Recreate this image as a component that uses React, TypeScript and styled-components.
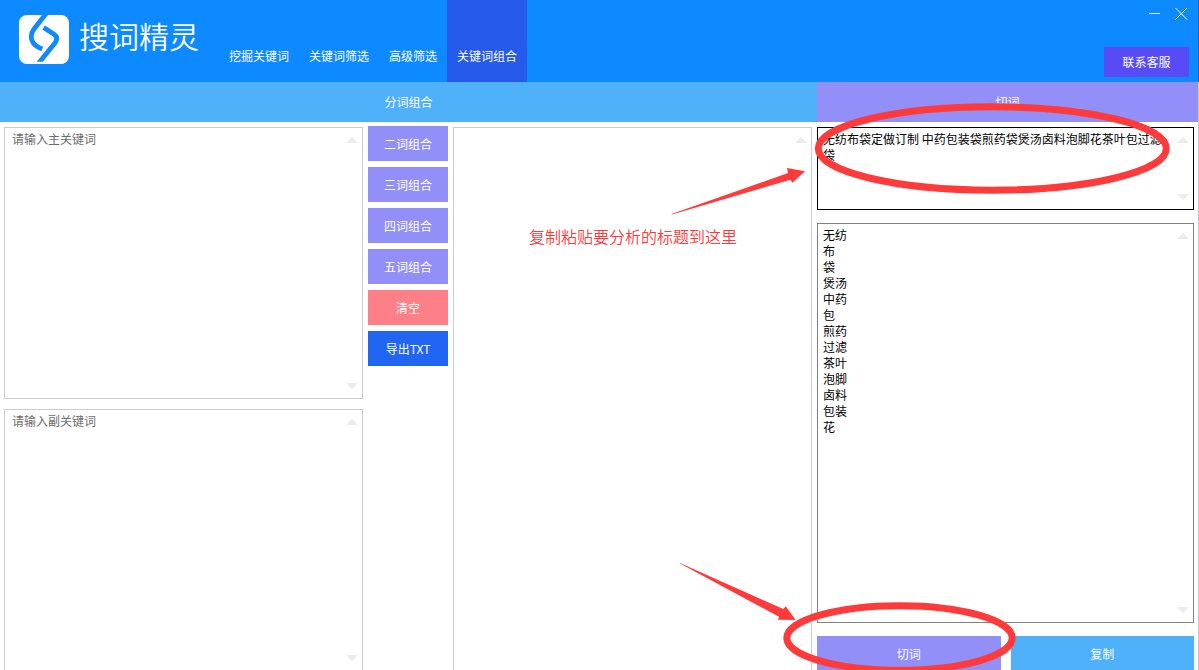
import React from 'react';
import styled, { createGlobalStyle } from 'styled-components';

const GlobalStyle = createGlobalStyle`
  *, *::before, *::after { box-sizing: border-box; }
  html, body { margin: 0; padding: 0; background: #fff; }
  body, button, textarea {
    font-family: "Noto Sans CJK SC", "Liberation Sans", sans-serif;
    font-size: 12px;
    line-height: 16px;
  }
`;

const colors = {
  header: '#0d8aff',
  active: '#255aeb',
  sky: '#50b1fb',
  violet: '#928ff8',
  contact: '#574bf6',
  coral: '#fd7f87',
  export: '#2166f3',
  mark: '#ff3a3a',
};

const Window = styled.div`
  position: relative;
  display: flex;
  flex-direction: column;
  height: 100vh;
  overflow: hidden;
  background: #fff;
`;

const Header = styled.header`
  display: flex;
  flex: none;
  height: 82px;
  background: ${colors.header};
  border-right: 1px solid #0a6ccb;
  color: #fff;
`;

const Brand = styled.div`
  display: flex;
  align-items: flex-start;
  gap: 10px;
  width: 219px;
  padding: 15px 0 0 19px;
`;

const Title = styled.h1`
  margin: 0;
  font-size: 30px;
  line-height: 40px;
  font-weight: 350;
  white-space: nowrap;
`;

const Nav = styled.nav`
  display: flex;
`;

const NavLink = styled.a<{ $active?: boolean }>`
  padding: 48px 10px 0;
  color: #fff;
  text-decoration: none;
  white-space: nowrap;
  background: ${(p) => (p.$active ? colors.active : 'transparent')};
`;

const HeaderSide = styled.div`
  display: flex;
  flex-direction: column;
  align-items: flex-end;
  justify-content: space-between;
  margin-left: auto;
  padding: 7px 9px 5px 0;
`;

const WindowControls = styled.div`
  display: flex;
  gap: 13px;
`;

const IconButton = styled.button`
  display: flex;
  padding: 0;
  border: 0;
  background: none;
  color: #fff;
`;

const Button = styled.button<{ $tone: string; $height?: number; $width?: string }>`
  height: ${(p) => p.$height ?? 35}px;
  width: ${(p) => p.$width ?? '100%'};
  flex: none;
  padding: 0;
  border: 0;
  background: ${(p) => p.$tone};
  color: #fff;
  text-align: center;
`;

const Main = styled.main`
  display: grid;
  grid-template-columns: 817fr 381fr;
  flex: 1 0 auto;
  min-height: 589px;
  border-right: 1px solid #c4c4c8;
`;

const Panel = styled.section`
  display: flex;
  flex-direction: column;
  min-width: 0;
`;

const PanelTitle = styled.h2<{ $tone: string }>`
  flex: none;
  height: 40px;
  margin: 0;
  background: ${(p) => p.$tone};
  color: #fff;
  font-size: 12px;
  font-weight: 400;
  line-height: 40px;
  text-align: center;
`;

const CombineBody = styled.div`
  display: grid;
  grid-template-columns: 1fr 80px 1fr;
  gap: 5px;
  flex: 1;
  padding: 4px 5px 0 4px;
`;

const FieldColumn = styled.div`
  display: flex;
  flex-direction: column;
  gap: 10px;
  padding-top: 1px;
`;

const ButtonColumn = styled.div`
  display: flex;
  flex-direction: column;
  gap: 6px;
`;

const SplitBody = styled.div`
  display: flex;
  flex-direction: column;
  gap: 13px;
  flex: 1;
  padding: 5px 4px 0 0;
`;

const SplitActions = styled.div`
  display: grid;
  grid-template-columns: 1fr 1fr;
  gap: 10px;
`;

const FieldBox = styled.div<{ $line: string; $height?: number }>`
  display: flex;
  flex: ${(p) => (p.$height ? `0 0 ${p.$height}px` : '1')};
  border: 1px solid ${(p) => p.$line};
  background: #fff;
`;

const TextArea = styled.textarea<{ $inset: number }>`
  flex: 1;
  min-width: 0;
  padding: 3px 0 3px ${(p) => p.$inset}px;
  border: 0;
  outline: 0;
  resize: none;
  overflow: hidden;
  background: none;
  color: #000;
  &::placeholder { color: #6d6d6d; opacity: 1; }
`;

const Rail = styled.div`
  display: flex;
  flex-direction: column;
  justify-content: space-between;
  align-items: center;
  flex: none;
  width: 21px;
  padding: 9px 0;
`;

const MarkLayer = styled.svg`
  position: absolute;
  top: 0;
  left: 0;
  pointer-events: none;
`;

const MarkNote = styled.span`
  position: absolute;
  top: 224px;
  left: 529px;
  color: ${colors.mark};
  font-size: 16px;
  font-weight: 350;
  line-height: 24px;
  white-space: nowrap;
`;

const Logo = () => (
  <svg width="50" height="50" viewBox="0 0 50 50" aria-hidden="true">
    <defs>
      <clipPath id="logo-mark">
        <rect width="50" height="46.7" />
      </clipPath>
    </defs>
    <rect width="50" height="49" rx="8" fill="#fff" />
    <g fill="none" stroke={colors.header} strokeWidth="4.8" clipPath="url(#logo-mark)">
      <path d="M28 -2.500L15 14Q10 21 14 27.500Q16.500 31.500 23.300 34" />
      <path d="M24.600 12.400L35 19.300Q39.500 22.500 36.300 27.500L19 49" />
    </g>
  </svg>
);

interface FieldProps {
  label: string;
  line: string;
  height?: number;
  inset?: number;
  placeholder?: string;
  value?: string;
  readOnly?: boolean;
}

const Field = ({ label, line, height, inset = 5, placeholder, value, readOnly }: FieldProps) => (
  <FieldBox $line={line} $height={height}>
    <TextArea
      aria-label={label}
      $inset={inset}
      placeholder={placeholder}
      defaultValue={value}
      readOnly={readOnly}
      spellCheck={false}
    />
    <Rail aria-hidden="true">
      <svg width="12" height="6" viewBox="0 0 12 6"><path d="M0 6L6 0L12 6Z" fill="#ececec" /></svg>
      <svg width="12" height="6" viewBox="0 0 12 6"><path d="M0 0L6 6L12 0Z" fill="#ececec" /></svg>
    </Rail>
  </FieldBox>
);

const navItems = ['挖掘关键词', '关键词筛选', '高级筛选', '关键词组合'];

const actions = [
  { label: '二词组合', tone: colors.violet },
  { label: '三词组合', tone: colors.violet },
  { label: '四词组合', tone: colors.violet },
  { label: '五词组合', tone: colors.violet },
  { label: '清空', tone: colors.coral },
  { label: '导出TXT', tone: colors.export },
];

const words = ['无纺', '布', '袋', '煲汤', '中药', '包', '煎药', '过滤', '茶叶', '泡脚', '卤料', '包装', '花'];

export default function App() {
  return (
    <Window>
      <GlobalStyle />
      <Header>
        <Brand>
          <Logo />
          <Title>搜词精灵</Title>
        </Brand>
        <Nav>
          {navItems.map((item) => (
            <NavLink key={item} href="#" $active={item === '关键词组合'}>{item}</NavLink>
          ))}
        </Nav>
        <HeaderSide>
          <WindowControls>
            <IconButton aria-label="最小化">
              <svg width="14" height="14" viewBox="0 0 14 14"><path d="M1 6.500H12" stroke="currentColor" /></svg>
            </IconButton>
            <IconButton aria-label="关闭">
              <svg width="14" height="14" viewBox="0 0 14 14"><path d="M0.500 1L12 12.500M12 1L0.500 12.500" stroke="currentColor" /></svg>
            </IconButton>
          </WindowControls>
          <Button $tone={colors.contact} $height={30} $width="85px">联系客服</Button>
        </HeaderSide>
      </Header>

      <Main>
        <Panel>
          <PanelTitle $tone={colors.sky}>分词组合</PanelTitle>
          <CombineBody>
            <FieldColumn>
              <Field label="主关键词" line="#ccc" height={272} inset={7} placeholder="请输入主关键词" />
              <Field label="副关键词" line="#ccc" inset={7} placeholder="请输入副关键词" />
            </FieldColumn>
            <ButtonColumn>
              {actions.map((a) => (
                <Button key={a.label} $tone={a.tone}>{a.label}</Button>
              ))}
            </ButtonColumn>
            <FieldColumn>
              <Field label="组合结果" line="#ccc" readOnly />
            </FieldColumn>
          </CombineBody>
        </Panel>

        <Panel>
          <PanelTitle $tone={colors.violet}>切词</PanelTitle>
          <SplitBody>
            <Field
              label="标题"
              line="#000"
              height={83}
              value="无纺布袋定做订制 中药包装袋煎药袋煲汤卤料泡脚花茶叶包过滤袋"
            />
            <Field label="切词结果" line="#828282" value={words.join('\n')} readOnly />
            <SplitActions>
              <Button $tone={colors.violet}>切词</Button>
              <Button $tone={colors.sky}>复制</Button>
            </SplitActions>
          </SplitBody>
        </Panel>
      </Main>

      <MarkLayer width="1199" height="670" viewBox="0 0 1199 670" aria-hidden="true">
        <g fill="none" stroke={colors.mark} strokeWidth="7">
          <ellipse cx="992.3" cy="148.5" rx="174" ry="41.7" />
          <ellipse cx="899.5" cy="638" rx="112.7" ry="32.3" />
        </g>
        <g fill={colors.mark}>
          <path d="M671.500 214L788 173L787 168L805 171.300L792.300 182.700L790.500 179.700L672 214.600Z" />
          <path d="M680 563L783.300 609L785.700 606.300L795.700 620L778 619.700L779 616.700L680 563.600Z" />
        </g>
      </MarkLayer>
      <MarkNote>复制粘贴要分析的标题到这里</MarkNote>
    </Window>
  );
}
